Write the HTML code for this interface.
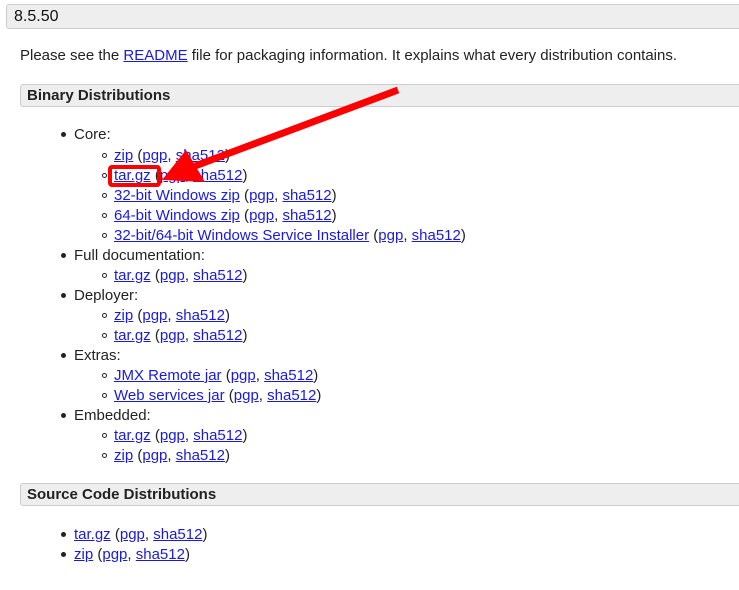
<!DOCTYPE html><html><head><style>
body{margin:0;width:739px;height:590px;background:#fff;font-family:"Liberation Sans",sans-serif;font-size:15px;color:#222;position:relative;overflow:hidden}
.h{position:absolute;background:#eeeeee;border:1px solid #ccc;border-radius:3px;font-weight:bold;box-sizing:border-box}
a{color:#1a1adb;text-decoration:underline}
.l{position:absolute;white-space:nowrap;line-height:20px}
.b{position:absolute;width:5px;height:5px;border-radius:50%;background:#222}
.c{position:absolute;width:5px;height:5px;border-radius:50%;border:1px solid #222;box-sizing:border-box}
</style></head><body>
<div class="h" style="left:6px;top:4px;width:740px;height:25px;font-size:16px;padding:3px 0 0 7px;font-weight:normal;color:#111">8.5.50</div>
<div class="l" style="left:20px;top:46px">Please see the <a>README</a> file for packaging information. It explains what every distribution contains.</div>
<div class="h" style="left:20px;top:84px;width:730px;height:23px;padding:2px 0 0 6px">Binary Distributions</div>
<div class="h" style="left:20px;top:483px;width:730px;height:23px;padding:2px 0 0 6px">Source Code Distributions</div>
<div id="list"></div>
<script>
var rows=[[134,0,'Core:'],[155,1,'<a>zip</a> (<a>pgp</a>, <a>sha512</a>)'],[175,1,'<a>tar.gz</a> (<a>pgp</a>, <a>sha512</a>)'],[195,1,'<a>32-bit Windows zip</a> (<a>pgp</a>, <a>sha512</a>)'],[215,1,'<a>64-bit Windows zip</a> (<a>pgp</a>, <a>sha512</a>)'],[235,1,'<a>32-bit/64-bit Windows Service Installer</a> (<a>pgp</a>, <a>sha512</a>)'],[255,0,'Full documentation:'],[275,1,'<a>tar.gz</a> (<a>pgp</a>, <a>sha512</a>)'],[295,0,'Deployer:'],[315,1,'<a>zip</a> (<a>pgp</a>, <a>sha512</a>)'],[335,1,'<a>tar.gz</a> (<a>pgp</a>, <a>sha512</a>)'],[355,0,'Extras:'],[375,1,'<a>JMX Remote jar</a> (<a>pgp</a>, <a>sha512</a>)'],[395,1,'<a>Web services jar</a> (<a>pgp</a>, <a>sha512</a>)'],[415,0,'Embedded:'],[435,1,'<a>tar.gz</a> (<a>pgp</a>, <a>sha512</a>)'],[455,1,'<a>zip</a> (<a>pgp</a>, <a>sha512</a>)'],[534,0,'<a>tar.gz</a> (<a>pgp</a>, <a>sha512</a>)'],[554,0,'<a>zip</a> (<a>pgp</a>, <a>sha512</a>)']];
var h='';rows.forEach(function(r){var y=r[0],lv=r[1];
if(lv==0){h+='<div class="b" style="left:61px;top:'+(y-2)+'px"></div><div class="l" style="left:74px;top:'+(y-9)+'px">'+r[2]+'</div>';}
else{h+='<div class="c" style="left:102px;top:'+(y-2)+'px"></div><div class="l" style="left:114px;top:'+(y-9)+'px">'+r[2]+'</div>';}});
document.getElementById('list').innerHTML=h;
</script>
<div style="position:absolute;left:108px;top:165px;width:53px;height:22px;border:4px solid #f00;border-radius:4px;box-sizing:border-box"></div>
<svg style="position:absolute;left:0;top:0" width="739" height="590"><line x1="398" y1="90" x2="195" y2="166" stroke="#f00" stroke-width="7"/><polygon points="162,180 186,150 205,182" fill="#f00"/></svg>
</body></html>
